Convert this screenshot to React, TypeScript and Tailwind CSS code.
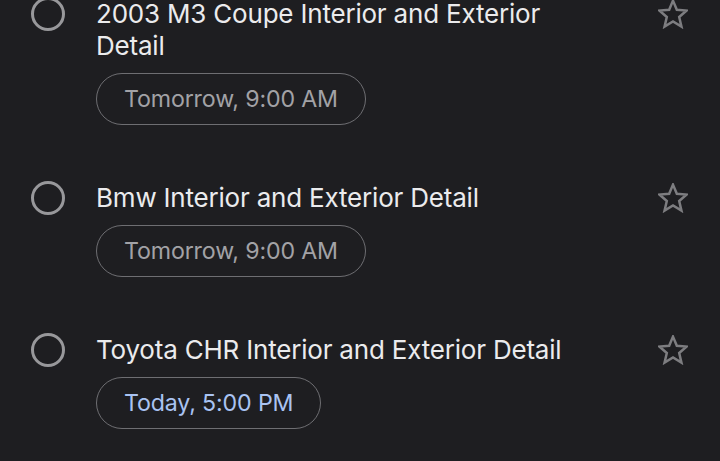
const tasks = [
  { title: "2003 M3 Coupe Interior and Exterior Detail", due: "Tomorrow, 9:00 AM", today: false },
  { title: "Bmw Interior and Exterior Detail", due: "Tomorrow, 9:00 AM", today: false },
  { title: "Toyota CHR Interior and Exterior Detail", due: "Today, 5:00 PM", today: true },
];

function StarIcon() {
  return (
    <svg viewBox="0 0 24 24" className="w-[30px] h-[30px]" fill="none" stroke="#7d7d80" strokeWidth="2" strokeLinejoin="miter">
      <polygon points="12,1.3 15.06,8.59 22.94,9.25 16.95,14.41 18.76,22.1 12,18 5.24,22.1 7.05,14.41 1.06,9.25 8.94,8.59" />
    </svg>
  );
}

export default function App() {
  return (
    <div className="w-[720px] h-[461px] overflow-hidden bg-[#1e1e21] font-['Inter','Liberation_Sans',sans-serif]">
      <ul className="flex flex-col gap-[57px] mt-[-2px]">
        {tasks.map((t) => (
          <li key={t.title} className="flex items-start">
            <div className="w-[96px] h-[32px] flex items-center justify-center shrink-0">
              <div className="w-[34px] h-[34px] rounded-full border-[3px] border-[#98989b]" />
            </div>
            <div className="flex-1 flex flex-col items-start gap-[11px]">
              <p className="text-[26px] leading-[32px] text-[#ebebed] tracking-[-0.2px] max-w-[500px]">{t.title}</p>
              <span
                className={
                  "h-[52px] px-[27px] flex items-center rounded-full border-[1.5px] border-[#6e6e72] text-[23.2px] tracking-[-0.15px] " +
                  (t.today ? "text-[#a9c3f2]" : "text-[#a2a2a6]")
                }
              >
                {t.due}
              </span>
            </div>
            <div className="w-[94px] h-[32px] flex items-center justify-center shrink-0">
              <StarIcon />
            </div>
          </li>
        ))}
      </ul>
    </div>
  );
}
